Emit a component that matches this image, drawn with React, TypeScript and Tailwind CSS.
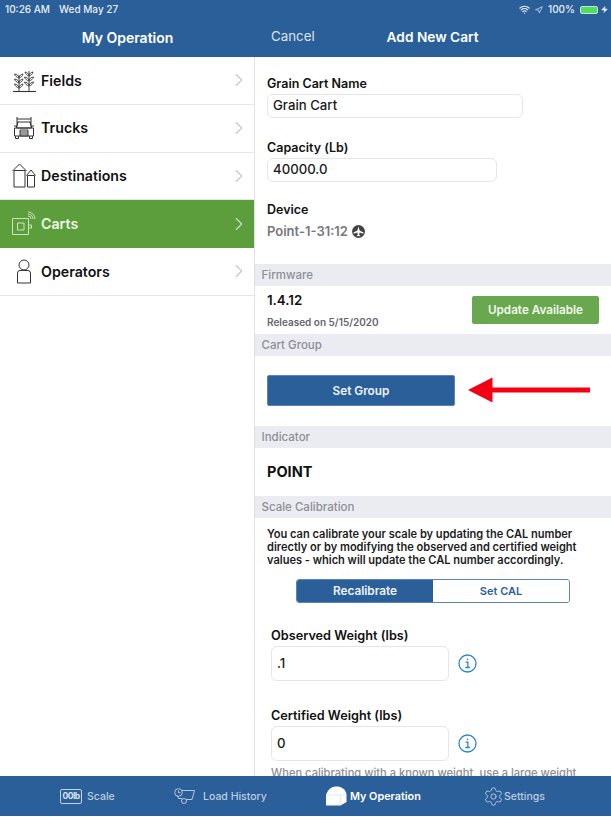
import React from "react";
import { ChevronRight, Settings, Navigation, Wifi, Zap } from "lucide-react";

const font = { fontFamily: "Inter, 'Liberation Sans', sans-serif" };

function FieldsIcon() {
  return (
    <svg width="25" height="25" viewBox="0 0 25 25" fill="none" stroke="#333" strokeWidth="0.9">
      <path d="M1 23.500H24" strokeWidth="1.100" />
      <path d="M7 23V7M17 23V3" />
      <path d="M7 20c-2-.5-4-2-4.500-4 2 .3 3.800 1.500 4.500 3M7 20c2-.5 3.500-2 4-4-2 .3-3.300 1.500-4 3M7 15c-2-.5-4-2-4.500-4 2 .3 3.800 1.500 4.500 3M7 15c2-.5 3.500-2 4-4-2 .3-3.300 1.500-4 3M7 10C5 9.500 3 8 2.500 6c2 .3 3.800 1.500 4.500 3M7 10c2-.5 3.500-2 4-4-2 .3-3.300 1.500-4 3" />
      <path d="M17 18c-2-.5-4-2-4.500-4 2 .3 3.800 1.500 4.500 3M17 18c2-.5 4-2 4.500-4-2 .3-3.800 1.500-4.500 3M17 13c-2-.5-4-2-4.500-4 2 .3 3.800 1.500 4.500 3M17 13c2-.5 4-2 4.500-4-2 .3-3.800 1.500-4.500 3M17 8c-2-.5-3.500-2-4-4 2 .3 3.300 1.500 4 3M17 8c2-.5 3.500-2 4-4-2 .3-3.300 1.500-4 3" />
    </svg>
  );
}

function TrucksIcon() {
  return (
    <svg width="24" height="24" viewBox="-1 0 24 24" fill="none" stroke="#333" strokeWidth="1">
      <path d="M4 1v9M18 1v9M4 3h14M4 6h14" />
      <path d="M5 6 3.500 12h15L17 6" />
      <path d="M1.500 12h19v8h-19z" />
      <path d="M7 14h8v6H7zM7 16h8M7 18h8" />
      <path d="M2.500 20v2.500h3V20M16.500 20v2.500h3V20" />
      <path d="M1 10h2.500v2M21 10h-2.500v2" />
    </svg>
  );
}

function DestinationsIcon() {
  return (
    <svg width="24" height="25" viewBox="0 0 24 25" fill="none" stroke="#333" strokeWidth="1">
      <path d="M2 24V7.500h11V24z" />
      <path d="M.5 8 7.500 1l7 7" />
      <path d="M15.500 24V12.500h7V24z" />
      <path d="M14.500 12.500 19 7l4.500 5.500" />
    </svg>
  );
}

function CartsIcon() {
  return (
    <svg width="25" height="25" viewBox="0 0 25 25" fill="none" stroke="#d8ecce" strokeWidth="0.9">
      <path d="M.5 7.500h16v16H.5z" />
      <path d="M5.500 12h6.500v7H5.500z" />
      <path d="M16.500 14h3v3h-3" />
      <path d="M16 5a3 3 0 0 1 3 3M16 3a5 5 0 0 1 5 5M16 1a7 7 0 0 1 7 7" />
    </svg>
  );
}

function OperatorsIcon() {
  return (
    <svg className="ml-[4px]" width="17" height="25" viewBox="0 0 17 25" fill="none" stroke="#333" strokeWidth="1">
      <circle cx="8" cy="6" r="5" />
      <path d="M1.500 24V14a2.500 2.500 0 0 1 2.500-2.500h8a2.500 2.500 0 0 1 2.500 2.500v10z" />
    </svg>
  );
}

function LoadHistoryIcon() {
  return (
    <svg width="23" height="17" viewBox="0 0 21 17" fill="none" stroke="#c3d2e3" strokeWidth="0.9">
      <circle cx="4.500" cy="4.500" r="3.800" />
      <path d="M4.500 2.500v2.200h2" />
      <path d="M8 2.500h12.500L18 11.500h-6M8 10.500H4.500L3.500 8" />
      <circle cx="10" cy="13" r="2.500" />
    </svg>
  );
}

function DomeIcon() {
  return (
    <svg width="21" height="20" viewBox="0 0 21 20" fill="#fff">
      <path d="M0 9C1.500 4 5 1 9.500.5 14 0 19 2 20.500 8v8l-6 3.500H0z" />
      <path d="M0 9h14.500l6-1M14.500 9v10.500" stroke="#b8c8dc" strokeWidth="0.4" fill="none" />
    </svg>
  );
}

function InfoIcon() {
  return (
    <svg width="19" height="19" viewBox="0 0 19 19" fill="none" stroke="#2a84dc" strokeWidth="1.300">
      <circle cx="9.500" cy="9.500" r="8.500" />
      <path d="M7.500 8.200h2.300v5M7.300 13.500h4.800" />
      <circle cx="9.500" cy="5.400" r="0.800" fill="#2a84dc" stroke="none" />
    </svg>
  );
}

function PlaneBadge() {
  return (
    <span className="mb-[1px] inline-flex h-[13px] w-[13px] items-center justify-center rounded-full bg-[#444]">
      <svg width="11" height="11" viewBox="0 0 10 10" fill="#fff">
        <path d="M5 .5 6 4l3.500 2v1L6 6l-.4 2 1 .8v.6L5 9 3.400 9.400v-.6l1-.8L4 6 .5 7V6L4 4z" />
      </svg>
    </span>
  );
}

function NavRow({ icon, label, active }: { icon: React.ReactNode; label: string; active?: boolean }) {
  return (
    <div
      className={`flex h-[47.750px] items-center border-b pl-[12px] pr-[4px] ${
        active ? "border-[#5c9e3c] bg-[#5c9e3c] text-[#eef6ea]" : "border-[#e6e8ec] bg-white text-[#111]"
      }`}
    >
      <div className="flex w-[29px] shrink-0 justify-start">{icon}</div>
      <span className="flex-1 text-[14.200px] font-semibold">{label}</span>
      <ChevronRight size={22} strokeWidth={1.200} className={active ? "text-[#cfe3c4]" : "text-[#c6c6ca]"} />
    </div>
  );
}

function Band({ children, className }: { children: string; className?: string }) {
  return (
    <div className={`flex h-[22px] items-center bg-[#ebebf2] px-[6.500px] pt-[1px] text-[11.500px] font-medium text-[#8d8e94] ${className ?? ""}`}>
      {children}
    </div>
  );
}

function Field({ value, className }: { value: string; className: string }) {
  return (
    <div className={`flex items-center rounded-[6px] border border-[#e6e6e8] bg-white text-[13.200px] font-medium text-[#1a1a1a] ${className}`}>
      {value}
    </div>
  );
}

function TabItem({ icon, label, active, className }: { icon: React.ReactNode; label: string; active?: boolean; className: string }) {
  return (
    <div className={`absolute top-0 flex h-full items-center ${className}`}>
      {icon}
      <span className={`pt-[2px] ${active ? "text-[10.800px] font-semibold text-white" : "text-[10.500px] font-medium text-[#bccde0]"}`}>{label}</span>
    </div>
  );
}

export default function App() {
  return (
    <div className="flex h-[817px] w-[611px] flex-col overflow-hidden bg-white" style={font}>
      <header className="flex h-[57px] shrink-0 flex-col bg-[#2b5f99] text-white">
        <div className="flex h-[18px] items-center justify-between pl-[5px] pr-[3px] pt-[1px] text-[10px] font-medium text-[#e8eef6]">
          <span>
            10:26 AM<span className="ml-[9px]">Wed May 27</span>
          </span>
          <span className="flex items-center gap-[5px]">
            <Wifi size={11} strokeWidth={2.500} />
            <Navigation size={8} strokeWidth={2} />
            <span>100%</span>
            <span className="flex items-center">
              <span className="block h-[8px] w-[18px] rounded-[2px] border border-[#cfdbe8] bg-[#4fe05a]" />
              <Zap size={7} fill="currentColor" className="ml-[3px]" />
            </span>
          </span>
        </div>
        <div className="flex flex-1 items-center pb-[1px]">
          <div className="w-[255px] text-center text-[14px] font-semibold">My Operation</div>
          <div className="relative flex flex-1 items-center">
            <span className="ml-[16px] text-[13.300px] text-[#d9e3ee]">Cancel</span>
            <span className="ml-[72px] text-[13.700px] font-semibold">Add New Cart</span>
          </div>
        </div>
      </header>

      <main className="flex min-h-0 flex-1">
        <aside className="w-[255px] shrink-0 border-r border-[#dfe1e6] bg-white">
          <NavRow icon={<FieldsIcon />} label="Fields" />
          <NavRow icon={<TrucksIcon />} label="Trucks" />
          <NavRow icon={<DestinationsIcon />} label="Destinations" />
          <NavRow icon={<CartsIcon />} label="Carts" active />
          <NavRow icon={<OperatorsIcon />} label="Operators" />
        </aside>

        <section className="relative min-w-0 flex-1 overflow-hidden">
          <div className="px-[12px] pt-[19px]">
            <div className="text-[12.500px] font-semibold leading-[16px] text-[#111]">Grain Cart Name</div>
            <Field value="Grain Cart" className="mt-[2px] h-[24px] w-[256px] pl-[5px]" />
            <div className="mt-[22px] text-[12.500px] font-semibold leading-[16px] text-[#111]">Capacity (Lb)</div>
            <Field value="40000.0" className="mt-[2px] h-[24px] w-[230px] pl-[5px]" />
            <div className="mt-[20px] text-[12.500px] font-semibold leading-[16px] text-[#111]">Device</div>
            <div className="mt-[6px] flex h-[16px] items-center gap-[4px] text-[13px] font-semibold text-[#77777c]">
              Point-1-31:12 <PlaneBadge />
            </div>
          </div>

          <Band className="mt-[24px]">Firmware</Band>
          <div className="flex h-[48px] items-start justify-between pl-[12px] pr-[12px]">
            <div>
              <div className="mt-[6px] text-[13.300px] font-semibold leading-[16px] text-[#111]">1.4.12</div>
              <div className="mt-[7px] text-[10px] font-semibold leading-[14px] text-[#66666b]">Released on 5/15/2020</div>
            </div>
            <div className="mt-[10px] flex h-[28px] w-[127px] items-center justify-center rounded-[2px] bg-[#6aa84f] pt-[1px] text-[11.700px] font-semibold text-[#f3f8ef]">
              Update Available
            </div>
          </div>

          <Band>Cart Group</Band>
          <div className="h-[70px] px-[12px] pt-[19px]">
            <div className="flex h-[31px] w-[188px] items-center justify-center rounded-[2px] border border-[#5b86b4] bg-[#2b5f99] pt-[2px] text-[11.800px] font-semibold text-[#eef3f8]">
              Set Group
            </div>
          </div>

          <Band>Indicator</Band>
          <div className="flex h-[48px] items-center px-[12px] text-[14.500px] font-bold text-[#111]">POINT</div>

          <Band>Scale Calibration</Band>
          <div className="px-[12px] pt-[10px] text-[11.050px] font-semibold leading-[13px] text-[#1c1c1e]">
            <p className="whitespace-nowrap">You can calibrate your scale by updating the CAL number</p>
            <p className="whitespace-nowrap">directly or by modifying the observed and certified weight</p>
            <p className="whitespace-nowrap">values - which will update the CAL number accordingly.</p>
          </div>

          <div className="ml-[41px] mt-[12px] flex h-[24px] w-[274px] overflow-hidden rounded-[3px] border border-[#5b86b4] font-semibold">
            <div className="flex w-[136px] items-center justify-center bg-[#2b5f99] pt-[1px] text-[11.800px] text-[#eef3f8]">Recalibrate</div>
            <div className="flex flex-1 items-center justify-center bg-white pt-[1px] text-[11px] text-[#2b5f99]">Set CAL</div>
          </div>

          <div className="pl-[16px] pt-[25px]">
            <div className="text-[12.700px] font-semibold leading-[16px] text-[#111]">Observed Weight (lbs)</div>
            <div className="mt-[2px] flex items-center">
              <Field value=".1" className="h-[35px] w-[178px] pl-[5px]" />
              <span className="ml-[9px]"><InfoIcon /></span>
            </div>
            <div className="mt-[27px] text-[12.700px] font-semibold leading-[16px] text-[#111]">Certified Weight (lbs)</div>
            <div className="mt-[2px] flex items-center">
              <Field value="0" className="h-[35px] w-[178px] pl-[5px]" />
              <span className="ml-[9px]"><InfoIcon /></span>
            </div>
            <div className="mt-[6px] whitespace-nowrap text-[11.150px] font-medium leading-[13px] text-[#8d8e94]">
              When calibrating with a known weight, use a large weight
            </div>
          </div>

          <svg className="absolute left-[213px] top-[320px]" width="123" height="26" viewBox="0 0 123 26" fill="#f40014">
            <path d="M0 13 24.500 .5V10.500H122V15.500H24.500V25.500z" />
          </svg>
        </section>
      </main>

      <footer className="relative mb-px h-[40px] shrink-0 bg-[#2b5f99]">
        <TabItem
          className="left-[60px]"
          label="Scale"
          icon={
            <span className="mr-[5px] flex h-[15px] w-[22px] items-center justify-center rounded-[2px] border border-[#c3d2e3] text-[8.500px] font-bold tracking-[-0.5px] text-[#dbe5ef]">
              00lb
            </span>
          }
        />
        <TabItem className="left-[173px]" label="Load History" icon={<span className="mr-[7px] flex"><LoadHistoryIcon /></span>} />
        <TabItem className="left-[326px]" label="My Operation" active icon={<span className="mr-[3px] flex"><DomeIcon /></span>} />
        <TabItem
          className="left-[483px]"
          label="Settings"
          icon={<Settings size={21} strokeWidth={1} className="mr-[0px] text-[#c3d2e3]" />}
        />
      </footer>
    </div>
  );
}
